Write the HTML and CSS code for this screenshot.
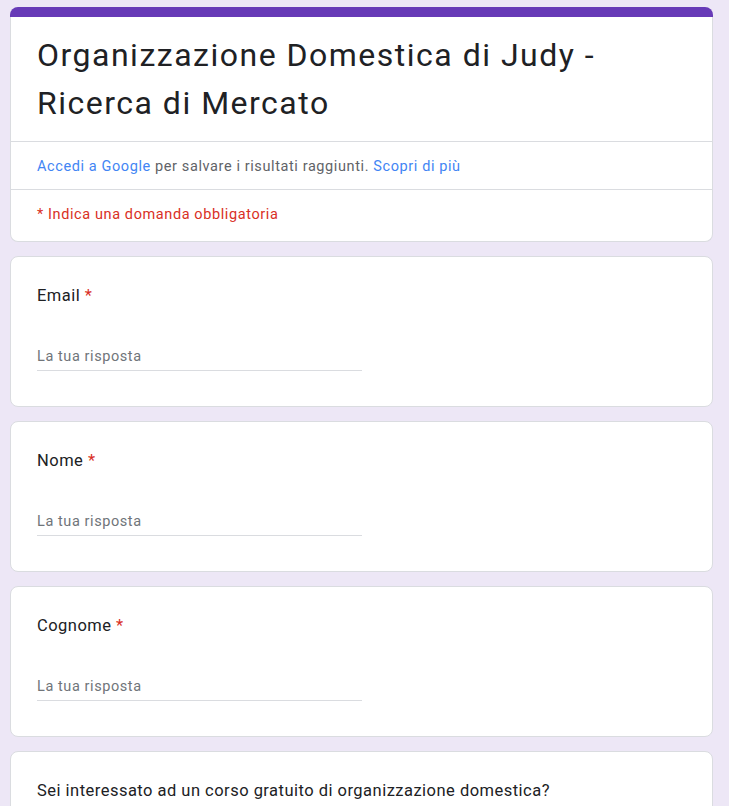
FILE: index.html
```html
<!DOCTYPE html>
<html lang="it">
<head>
<meta charset="utf-8">
<title>Organizzazione Domestica di Judy - Ricerca di Mercato</title>
<link rel="stylesheet" href="styles.css">
</head>
<body>
<main class="form">
  <section class="header">
    <div class="header-bar"></div>
    <div class="header-body">
      <h1 class="form-title">Organizzazione Domestica di Judy - Ricerca di Mercato</h1>
      <div class="header-row">
        <a class="link" href="#">Accedi a Google</a> per salvare i risultati raggiunti. <a class="link" href="#">Scopri di più</a>
      </div>
      <div class="header-row header-row-last required-note">* Indica una domanda obbligatoria</div>
    </div>
  </section>

  <section class="card">
    <div class="q-title">Email <span class="req">*</span></div>
    <div class="answer">La tua risposta</div>
  </section>

  <section class="card">
    <div class="q-title">Nome <span class="req">*</span></div>
    <div class="answer">La tua risposta</div>
  </section>

  <section class="card">
    <div class="q-title">Cognome <span class="req">*</span></div>
    <div class="answer">La tua risposta</div>
  </section>

  <section class="card">
    <div class="q-title">Sei interessato ad un corso gratuito di organizzazione domestica?</div>
    <div class="answer">La tua risposta</div>
  </section>
</main>
</body>
</html>
```

FILE: styles.css
```css
html, body {
  margin: 0;
  padding: 0;
}

body {
  background: #ede7f6;
  font-family: Roboto, "Noto Sans", Arial, sans-serif;
  color: #202124;
  overflow: hidden;
}

.form {
  width: 703px;
  margin: 0 0 0 10px;
  padding-top: 7px;
  display: flex;
  flex-direction: column;
  gap: 14px;
}

.header {
  display: flex;
  flex-direction: column;
}

.header-bar {
  height: 10px;
  background: #673ab7;
  border-radius: 8px 8px 0 0;
}

.header-body {
  background: #fff;
  border: 1px solid #dadce0;
  border-top: none;
  border-radius: 0 0 8px 8px;
}

.form-title {
  margin: 0;
  padding: 14px 26px 14px;
  font-size: 32px;
  line-height: 48px;
  font-weight: 400;
  letter-spacing: 1.5px;
  color: #202124;
  border-bottom: 1px solid #dadce0;
}

.header-row {
  padding: 15px 26px 12px;
  font-size: 14.5px;
  line-height: 20px;
  letter-spacing: 0.6px;
  color: #5f6368;
  border-bottom: 1px solid #dadce0;
}

.header-row-last {
  border-bottom: none;
  padding-bottom: 16px;
}

.link {
  color: #4285f4;
  text-decoration: none;
}

.required-note {
  color: #d93025;
}

.card {
  background: #fff;
  border: 1px solid #dadce0;
  border-radius: 8px;
  padding: 27px 26px 35px;
}

.q-title {
  font-size: 16.5px;
  line-height: 24px;
  letter-spacing: 0.48px;
  color: #202124;
}

.req {
  color: #d93025;
}

.answer {
  margin-top: 39px;
  width: 50%;
  font-size: 14.5px;
  line-height: 20px;
  letter-spacing: 0.58px;
  padding-bottom: 3px;
  color: #70757a;
  border-bottom: 1px solid #dadce0;
}
```
